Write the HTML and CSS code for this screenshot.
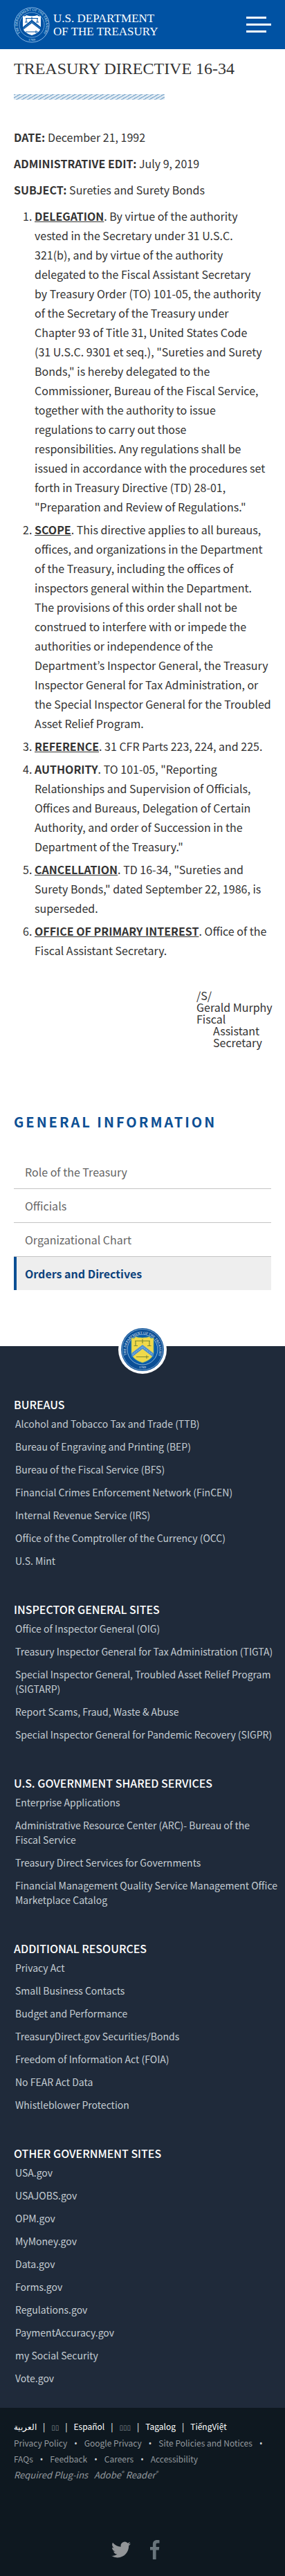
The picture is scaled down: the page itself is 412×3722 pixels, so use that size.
FILE: index.html
```html
<!DOCTYPE html>
<html lang="en">
<head>
<meta charset="utf-8">
<meta name="viewport" content="width=device-width, initial-scale=1">
<title>Treasury Directive 16-34</title>
<link rel="stylesheet" href="styles.css">
</head>
<body>
<header class="site-header">
  <a class="brand" href="#">
    <svg class="brand-seal" viewBox="0 0 52 52" aria-hidden="true">
      <defs><path id="ring" d="M10.500 39.500 A20.500 20.500 0 1 1 41.500 39.500"/></defs>
      <circle cx="26" cy="26" r="25" fill="none" stroke="#8db9e6" stroke-width="1"/>
      <circle cx="26" cy="26" r="18" fill="none" stroke="#8db9e6" stroke-width=".8"/>
      <text class="seal-text" fill="#dcebf9"><textPath href="#ring" startOffset="2">THE DEPARTMENT OF THE TREASURY</textPath></text>
      <text class="seal-text" x="26" y="49" text-anchor="middle" fill="#dcebf9">1789</text>
      <path d="M13 13 Q16 14.500 18 12 Q26 14.500 34 12 Q36 14.500 39 13 V29 Q39 37 26 41 Q13 37 13 29Z" fill="#fff"/>
      <path d="M13 29 L26 18.500 39 29 V33.500 L26 23.500 13 33.500Z" fill="#0052a3"/>
      <path d="M14 31 L26 21.500 38 31" fill="none" stroke="#fff" stroke-width=".8" stroke-dasharray="1 1.500"/>
      <path d="M17 16.500H35 M26 14.500V19 M18 17V22 M34 17V22 M16 22H20 M32 22H36 M17 36H35 M32 34V38" stroke="#0052a3" fill="none" stroke-width="1"/>
    </svg>
    <span class="brand-name">U.S. DEPARTMENT<br>OF THE TREASURY</span>
  </a>
  <button class="menu-button" type="button" aria-label="Menu"><span class="bar"></span><span class="bar bar-long"></span><span class="bar"></span></button>
</header>

<main class="content">
  <h1 class="page-title">TREASURY DIRECTIVE 16-34</h1>
  <div class="stripe"></div>
  <article class="directive">
    <p><strong>DATE:</strong> December 21, 1992</p>
    <p><strong>ADMINISTRATIVE EDIT:</strong> July 9, 2019</p>
    <p><strong>SUBJECT:</strong> Sureties and Surety Bonds</p>
    <ol class="clauses">
      <li><strong class="term">DELEGATION</strong>. By virtue of the authority vested&nbsp;in the Secretary under 31 U.S.C. 321(b),&nbsp;and by virtue of the authority delegated to the Fiscal Assistant Secretary by&nbsp;Treasury Order (TO) 101-05, the authority of&nbsp;the Secretary of the Treasury under Chapter&nbsp;93 of Title 31, United States Code (31&nbsp;U.S.C. 9301 et seq.), "Sureties and Surety Bonds," is hereby delegated to the Commissioner, Bureau of the Fiscal Service, together with the authority to issue regulations to carry out those responsibilities.&nbsp;Any regulations shall be issued in accordance with the procedures set forth in Treasury Directive (TD) 28-01, "Preparation and Review of Regulations."</li>
      <li><strong class="term">SCOPE</strong>. This directive applies to all bureaus, offices, and organizations in the Department of&nbsp;the Treasury, including the offices of inspectors general within the Department. The&nbsp;provisions of this order shall not be construed to interfere with or impede the authorities or independence of the Department’s Inspector General, the Treasury Inspector General for Tax Administration, or the Special Inspector General for the Troubled Asset Relief Program.</li>
      <li><strong class="term">REFERENCE</strong>. 31 CFR Parts 223, 224, and 225.</li>
      <li><strong>AUTHORITY</strong>. TO 101-05, "Reporting Relationships and Supervision of Officials, Offices and Bureaus, Delegation of Certain Authority, and order of Succession in the Department of the Treasury."</li>
      <li><strong class="term">CANCELLATION</strong>. TD 16-34, "Sureties and Surety Bonds," dated September 22, 1986, is superseded.</li>
      <li><strong class="term">OFFICE OF PRIMARY INTEREST</strong>. Office of the Fiscal Assistant Secretary.</li>
    </ol>
    <div class="signature">
      <div>/S/</div>
      <div>Gerald Murphy</div>
      <div>Fiscal</div>
      <div class="signature-indent">Assistant<br>Secretary</div>
    </div>
  </article>

  <nav class="section-nav" aria-labelledby="nav-title">
    <h2 class="nav-title" id="nav-title">GENERAL INFORMATION</h2>
    <ul class="nav-list">
      <li><a href="#">Role of the Treasury</a></li>
      <li><a href="#">Officials</a></li>
      <li><a href="#">Organizational Chart</a></li>
      <li><a class="active" href="#" aria-current="page">Orders and Directives</a></li>
    </ul>
  </nav>
</main>

<footer class="site-footer">
  <svg class="footer-seal" viewBox="0 0 70 70" aria-hidden="true">
    <defs><path id="ring2" d="M16 51 A24 24 0 1 1 54 51"/></defs>
    <circle cx="35" cy="35" r="35" fill="#fff"/>
    <circle cx="35" cy="35" r="31" fill="#0b4f96"/>
    <circle cx="35" cy="35" r="29.500" fill="none" stroke="#8fb6d8" stroke-width=".8"/>
    <circle cx="35" cy="35" r="22" fill="#0a5cab" stroke="#a9cbe4" stroke-width=".8"/>
    <text class="seal-text" fill="#e4eff8"><textPath href="#ring2" startOffset="9">THE DEPARTMENT OF THE TREASURY</textPath></text>
    <text class="seal-text" x="35" y="62" text-anchor="middle" fill="#e4eff8">1789</text>
    <path d="M19 18 Q23 20 25 16.500 Q35 19.500 45 16.500 Q47 20 51 18 V40 Q50 49 35 54 Q20 49 19 40Z" fill="#f0d94a" stroke="#7fb27a" stroke-width=".8"/>
    <path d="M19.500 40 L35 28 50.500 40 V46 L35 34 19.500 46Z" fill="#4a8fd4"/>
    <path d="M21 42 L35 31 49 42" fill="none" stroke="#f3f4d0" stroke-width="1" stroke-dasharray="1 2"/>
    <path d="M24 22.500H46 M35 20V26 M25 23V29 M45 23V29 M22.500 29.500H28 M42 29.500H47.500 M26 45.500H44 M41 43.500V48" stroke="#7d8a35" fill="none" stroke-width="1.200"/>
  </svg>
  <div class="footer-groups">
    <section class="group">
      <h3>BUREAUS</h3>
      <ul>
        <li><a href="#">Alcohol and Tobacco Tax and Trade (TTB)</a></li>
        <li><a href="#">Bureau of Engraving and Printing (BEP)</a></li>
        <li><a href="#">Bureau of the Fiscal Service (BFS)</a></li>
        <li><a href="#">Financial Crimes Enforcement Network (FinCEN)</a></li>
        <li><a href="#">Internal Revenue Service (IRS)</a></li>
        <li><a href="#">Office of the Comptroller of the Currency (OCC)</a></li>
        <li><a href="#">U.S. Mint</a></li>
      </ul>
    </section>
    <section class="group">
      <h3>INSPECTOR GENERAL SITES</h3>
      <ul>
        <li><a href="#">Office of Inspector General (OIG)</a></li>
        <li><a href="#">Treasury Inspector General for Tax Administration (TIGTA)</a></li>
        <li><a href="#">Special Inspector General, Troubled Asset Relief Program (SIGTARP)</a></li>
        <li><a href="#">Report Scams, Fraud, Waste &amp; Abuse</a></li>
        <li><a href="#">Special Inspector General for Pandemic Recovery (SIGPR)</a></li>
      </ul>
    </section>
    <section class="group">
      <h3>U.S. GOVERNMENT SHARED SERVICES</h3>
      <ul>
        <li><a href="#">Enterprise Applications</a></li>
        <li><a href="#">Administrative Resource Center (ARC)- Bureau of the Fiscal&nbsp;Service</a></li>
        <li><a href="#">Treasury Direct Services for Governments</a></li>
        <li><a href="#">Financial Management Quality Service Management Office Marketplace Catalog</a></li>
      </ul>
    </section>
    <section class="group">
      <h3>ADDITIONAL RESOURCES</h3>
      <ul>
        <li><a href="#">Privacy Act</a></li>
        <li><a href="#">Small Business Contacts</a></li>
        <li><a href="#">Budget and Performance</a></li>
        <li><a href="#">TreasuryDirect.gov Securities/Bonds</a></li>
        <li><a href="#">Freedom of Information Act (FOIA)</a></li>
        <li><a href="#">No FEAR Act Data</a></li>
        <li><a href="#">Whistleblower Protection</a></li>
      </ul>
    </section>
    <section class="group">
      <h3>OTHER GOVERNMENT SITES</h3>
      <ul>
        <li><a href="#">USA.gov</a></li>
        <li><a href="#">USAJOBS.gov</a></li>
        <li><a href="#">OPM.gov</a></li>
        <li><a href="#">MyMoney.gov</a></li>
        <li><a href="#">Data.gov</a></li>
        <li><a href="#">Forms.gov</a></li>
        <li><a href="#">Regulations.gov</a></li>
        <li><a href="#">PaymentAccuracy.gov</a></li>
        <li><a href="#">my Social Security</a></li>
        <li><a href="#">Vote.gov</a></li>
      </ul>
    </section>
  </div>
  <div class="legal">
    <ul class="languages">
      <li><a href="#" lang="ar">العربية</a></li>
      <li><a class="boxes" href="#">▯▯</a></li>
      <li><a href="#">Español</a></li>
      <li><a class="boxes" href="#">▯▯▯</a></li>
      <li><a href="#">Tagalog</a></li>
      <li><a href="#">TiếngViệt</a></li>
    </ul>
    <ul class="policies">
      <li><a href="#">Privacy Policy</a></li>
      <li><a href="#">Google Privacy</a></li>
      <li><a href="#">Site Policies and Notices</a></li>
      <li><a href="#">FAQs</a></li>
      <li><a href="#">Feedback</a></li>
      <li><a href="#">Careers</a></li>
      <li><a href="#">Accessibility</a></li>
    </ul>
    <p class="plugins">Required Plug-ins &nbsp; <a href="#">Adobe<sup>®</sup> Reader<sup>®</sup></a></p>
    <div class="social">
      <a href="#" aria-label="Twitter"><svg width="28" height="28" viewBox="0 0 24 24" fill="#929598"><path d="M23.950 4.570a10 10 0 01-2.820.770 4.960 4.960 0 002.160-2.720c-.950.550-2 .950-3.130 1.190a4.920 4.920 0 00-8.380 4.480C7.690 8.090 4.070 6.130 1.640 3.160a4.820 4.820 0 00-.670 2.480c0 1.710.870 3.210 2.190 4.100a4.900 4.900 0 01-2.230-.620v.060a4.920 4.920 0 003.950 4.830 5 5 0 01-2.210.080 4.940 4.940 0 004.600 3.420A9.870 9.870 0 010 19.540a14 14 0 007.550 2.210c9.050 0 14-7.500 14-13.980 0-.210 0-.420-.020-.630a9.900 9.900 0 002.420-2.570z"/></svg></a>
      <a href="#" aria-label="Facebook"><svg width="14" height="28" viewBox="0 0 14 28" fill="#69757c"><path d="M13.500.200v4.300h-2.600c-2 0-2.300.900-2.300 2.300v3.100h4.700l-.600 4.600H8.600V28H3.900V14.500H0V9.900h3.900V6.200C3.900 2.200 6.300 0 10 0c1.700 0 3.200.1 3.500.2z"/></svg></a>
    </div>
  </div>
</footer>
</body>
</html>
```
FILE: styles.css
```css
* { box-sizing: border-box; }
body {
  margin: 0;
  background: #fff;
  color: #333;
  font: 16px/28px "Noto Sans CJK KR", "Noto Sans", sans-serif;
}
a { color: inherit; text-decoration: none; }
ul { margin: 0; padding: 0; list-style: none; }

.site-header {
  display: flex;
  align-items: center;
  justify-content: space-between;
  height: 71px;
  padding: 0 20px;
  background: #0052a3;
}
.brand { display: flex; align-items: center; gap: 5px; color: #fff; }
.brand-seal { width: 52px; height: 52px; }
.brand-name { font: 17px/19px "Liberation Serif", serif; }
.seal-text { font: 5px "Liberation Serif", serif; }
.menu-button {
  display: flex;
  flex-direction: column;
  gap: 7px;
  padding: 0;
  border: 0;
  background: none;
}
.bar { width: 29px; height: 3px; background: #fff; }
.bar-long { width: 36px; }

.content { padding: 0 16px 0 20px; }
.page-title {
  margin: 0;
  padding-top: 12px;
  font: 24px/32px "Liberation Serif", serif;
}
.stripe {
  width: 218px;
  max-width: 100%;
  height: 8px;
  margin-top: 21px;
  background: repeating-linear-gradient(150deg, #8fb3d2 0 1px, #e3edf5 2px 4px);
}
.directive { padding-top: 40px; }
.directive p { margin: 0 0 10px; }
.clauses { margin: 0; padding-left: 30px; }
.clauses li { margin-bottom: 5px; }
.term { text-decoration: underline; }
.signature {
  width: 108px;
  margin: 43px 4px 0 auto;
  line-height: 17px;
  white-space: nowrap;
}
.signature-indent { padding-left: 24px; }

.section-nav { padding-right: 4px; }
.nav-title {
  margin: 0;
  padding-top: 92px;
  color: #0c4f94;
  font-size: 20px;
  line-height: 28px;
  letter-spacing: 3px;
}
.nav-list { margin-top: 34px; }
.nav-list li + li { border-top: 1px solid #c4c4c4; }
.nav-list a {
  display: block;
  padding: 10px 16px;
  color: #666;
}
.nav-list .active {
  padding-left: 12px;
  border-left: 4px solid #0c4f94;
  background: #eee;
  color: #0c427c;
  font-weight: 700;
}

.site-footer {
  position: relative;
  margin-top: 81px;
  background: #1f2a3a;
}
.footer-seal {
  position: absolute;
  top: -30px;
  left: 50%;
  width: 70px;
  height: 70px;
  margin-left: -35px;
}
.footer-groups {
  display: grid;
  gap: 37px;
  padding: 70px 8px 24px 20px;
}
.group h3 {
  margin: 0;
  color: #fff;
  font-size: 16px;
  font-weight: 500;
  line-height: 28px;
}
.group ul { padding-left: 2px; color: #c5cdd3; font-size: 14px; line-height: 21px; }
.group li { padding: 4px 0 8px; }

.legal {
  padding: 16px 20px 28px;
  background: #0e1820;
  color: #93999e;
  font-size: 12px;
  line-height: 22px;
}
.languages, .policies { display: flex; flex-wrap: wrap; }
.languages { color: #fff; }
.languages li + li::before { content: "|"; margin: 0 9px; }
.policies li:not(:last-child)::after {
  content: "•";
  margin: 0 10px;
  color: #cfd4d8;
  font-family: "Noto Sans", sans-serif;
}
.boxes { color: #858c91; font-family: "DejaVu Sans", sans-serif; font-size: 10px; }
.plugins { margin: 0; font-size: 13px; font-style: italic; }
.plugins sup { font-size: 8px; line-height: 1; }
.social {
  display: flex;
  justify-content: center;
  gap: 28px;
  margin-top: 83px;
  padding-right: 20px;
}
.social svg { display: block; }
```
